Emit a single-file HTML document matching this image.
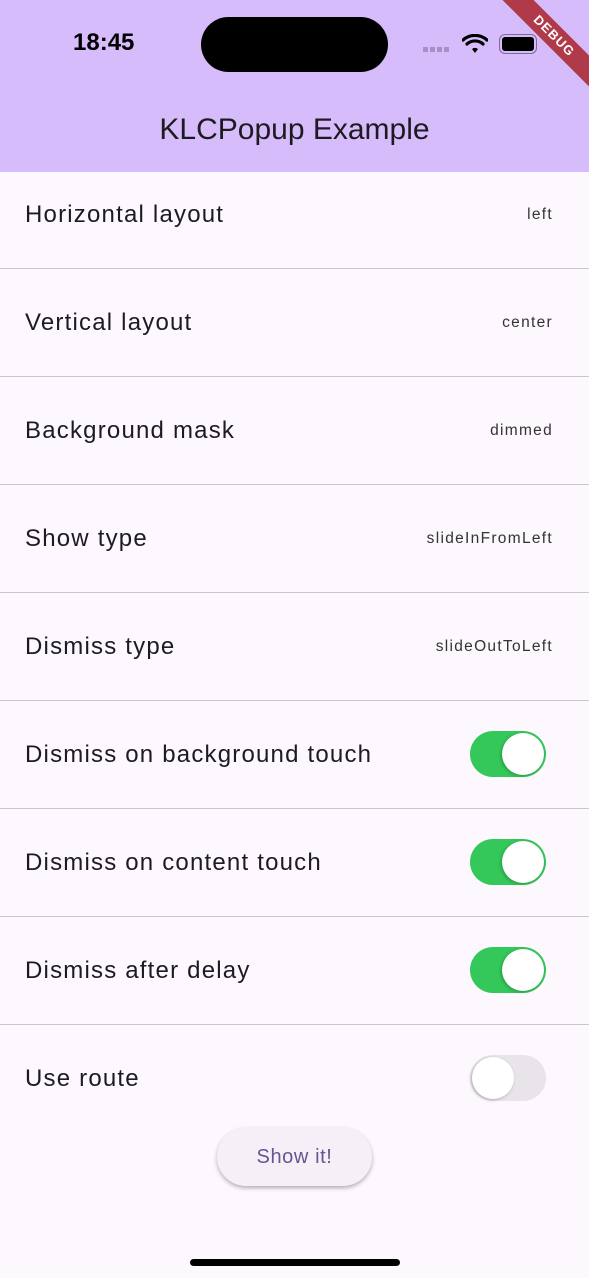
<!DOCTYPE html>
<html><head><meta charset="utf-8"><style>
*{margin:0;padding:0;box-sizing:border-box}
body{width:589px;height:1278px;background:#fdf7fe;position:relative;overflow:hidden;font-family:"Liberation Sans",sans-serif;color:#1d1b20}
.bar{position:absolute;left:0;top:0;width:589px;height:172px;background:#d6bcfb}
.time{position:absolute;left:73px;top:29px;font-size:24px;font-weight:bold;color:#000}
.island{position:absolute;left:201px;top:17px;width:187px;height:55px;background:#000;border-radius:28px}
.title{position:absolute;top:113px;width:589px;text-align:center;font-size:30px;letter-spacing:0}
.row{position:absolute;left:0;width:589px;height:108px;border-bottom:1.5px solid #cac4cf}
.lab{position:absolute;left:25px;top:40px;font-size:24px;letter-spacing:1.2px}
.val{position:absolute;right:36px;top:45px;font-size:15.5px;letter-spacing:1.3px;color:#333}
.tg{position:absolute;left:470px;top:30px;width:76px;height:46px;border-radius:23px;background:#34c759}
.tg::after{content:"";position:absolute;top:2px;left:32px;width:42px;height:42px;border-radius:50%;background:#fff;box-shadow:-1px 1px 3px rgba(0,0,0,.25)}
.off{background:#e8e4ea}.off::after{left:2px}
.btn{position:absolute;left:217px;top:1128px;width:155px;height:58px;border-radius:29px;background:#f6eff8;box-shadow:0 2px 4px rgba(0,0,0,.3);text-align:center;line-height:58px;font-size:20px;letter-spacing:0.6px;color:#65558f}
.home{position:absolute;left:190px;top:1259px;width:210px;height:7px;border-radius:4px;background:#000}
.ribbon{position:absolute;right:-40px;top:25px;width:150px;height:22px;background:#b03a4a;transform:rotate(45deg);color:#fff;font-size:13px;font-weight:bold;text-align:center;line-height:22px;letter-spacing:1px}
</style></head><body>
<div class="row" style="top:161px"><div class="lab">Horizontal layout</div><div class="val">left</div></div>
<div class="row" style="top:269px"><div class="lab">Vertical layout</div><div class="val">center</div></div>
<div class="row" style="top:377px"><div class="lab">Background mask</div><div class="val">dimmed</div></div>
<div class="row" style="top:485px"><div class="lab">Show type</div><div class="val">slideInFromLeft</div></div>
<div class="row" style="top:593px"><div class="lab">Dismiss type</div><div class="val">slideOutToLeft</div></div>
<div class="row" style="top:701px"><div class="lab">Dismiss on background touch</div><div class="tg"></div></div>
<div class="row" style="top:809px"><div class="lab">Dismiss on content touch</div><div class="tg"></div></div>
<div class="row" style="top:917px"><div class="lab">Dismiss after delay</div><div class="tg"></div></div>
<div class="row" style="top:1025px;border:none"><div class="lab">Use route</div><div class="tg off"></div></div>
<div class="bar"></div>
<div class="time">18:45</div>
<div class="island"></div>
<div style="position:absolute;left:423px;top:47px;width:28px;height:5px;background:repeating-linear-gradient(90deg,#a88fc8 0 5px,transparent 5px 7px)"></div>
<svg style="position:absolute;left:462px;top:34px" width="26" height="20" viewBox="0 0 26 20"><path d="M13 19l3-4a5 5 0 0 0-6 0z" fill="#000"/><path d="M5 10a12 12 0 0 1 16 0M1 6a18 18 0 0 1 24 0" stroke="#000" stroke-width="3.2" fill="none" stroke-linecap="round"/></svg>
<div style="position:absolute;left:499px;top:34px;width:38px;height:20px;border:1.5px solid #7d6a98;border-radius:6px;padding:2px"><div style="width:100%;height:100%;background:#000;border-radius:3px"></div></div>
<div class="title">KLCPopup Example</div>
<div class="ribbon">DEBUG</div>
<div class="btn">Show it!</div>
<div class="home"></div>
</body></html>
